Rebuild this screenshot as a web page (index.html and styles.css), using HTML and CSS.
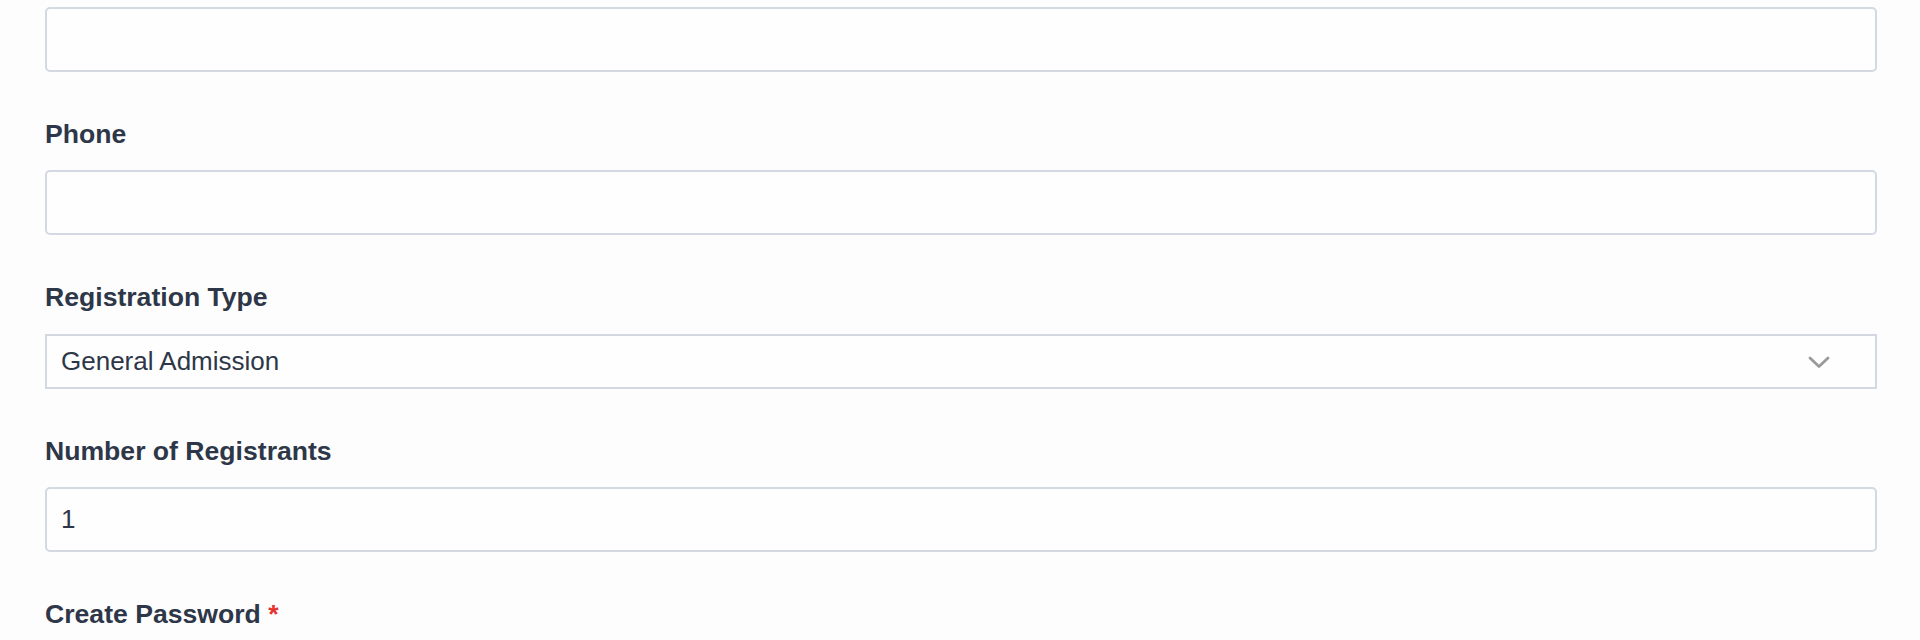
FILE: index.html
```html
<!DOCTYPE html>
<html lang="en">
<head>
<meta charset="utf-8">
<title>Registration</title>
<link rel="stylesheet" href="styles.css">
</head>
<body>
<form class="form">
  <div class="field field-first">
    <input class="input" type="text" value="">
  </div>
  <div class="field">
    <label class="label">Phone</label>
    <input class="input" type="text" value="">
  </div>
  <div class="field">
    <label class="label">Registration Type</label>
    <div class="select">
      <span class="select-value">General Admission</span>
      <svg class="chevron" width="22" height="13" viewBox="0 0 22 13" aria-hidden="true">
        <polyline points="2,2 11,10.5 20,2" fill="none" stroke="#9a9a9a" stroke-width="2.8" stroke-linecap="round" stroke-linejoin="round"/>
      </svg>
    </div>
  </div>
  <div class="field">
    <label class="label">Number of Registrants</label>
    <input class="input" type="text" value="1">
  </div>
  <div class="field">
    <label class="label">Create Password <span class="req">*</span></label>
    <input class="input" type="password" value="">
  </div>
</form>
</body>
</html>
```

FILE: styles.css
```css
html, body {
  margin: 0;
  padding: 0;
  background: #fdfdfe;
}

body {
  font-family: "Liberation Sans", Arial, sans-serif;
  color: #2d3748;
}

.form {
  display: flex;
  flex-direction: column;
  gap: 43px;
  padding: 6.5px 43px 0 45px;
}

.field {
  display: flex;
  flex-direction: column;
}

.label {
  display: block;
  font-size: 26.6px;
  line-height: 39px;
  font-weight: 700;
  color: #2d3748;
  margin-bottom: 16.5px;
}

.req {
  color: #e3342f;
}

.input {
  box-sizing: border-box;
  width: 100%;
  height: 65px;
  margin: 0;
  padding: 0 14px;
  border: 2px solid #d3d9e3;
  border-radius: 5px;
  background: #fefefe;
  font-family: "Liberation Sans", Arial, sans-serif;
  font-size: 26px;
  color: #2d3748;
  outline: none;
}

.select {
  box-sizing: border-box;
  height: 55px;
  display: flex;
  align-items: center;
  justify-content: space-between;
  padding: 0 45px 0 14px;
  border: 2px solid #d3d9e3;
  background: #fefefe;
  font-size: 26px;
  color: #2d3748;
}

.chevron {
  display: block;
  margin-top: 2px;
}
```
